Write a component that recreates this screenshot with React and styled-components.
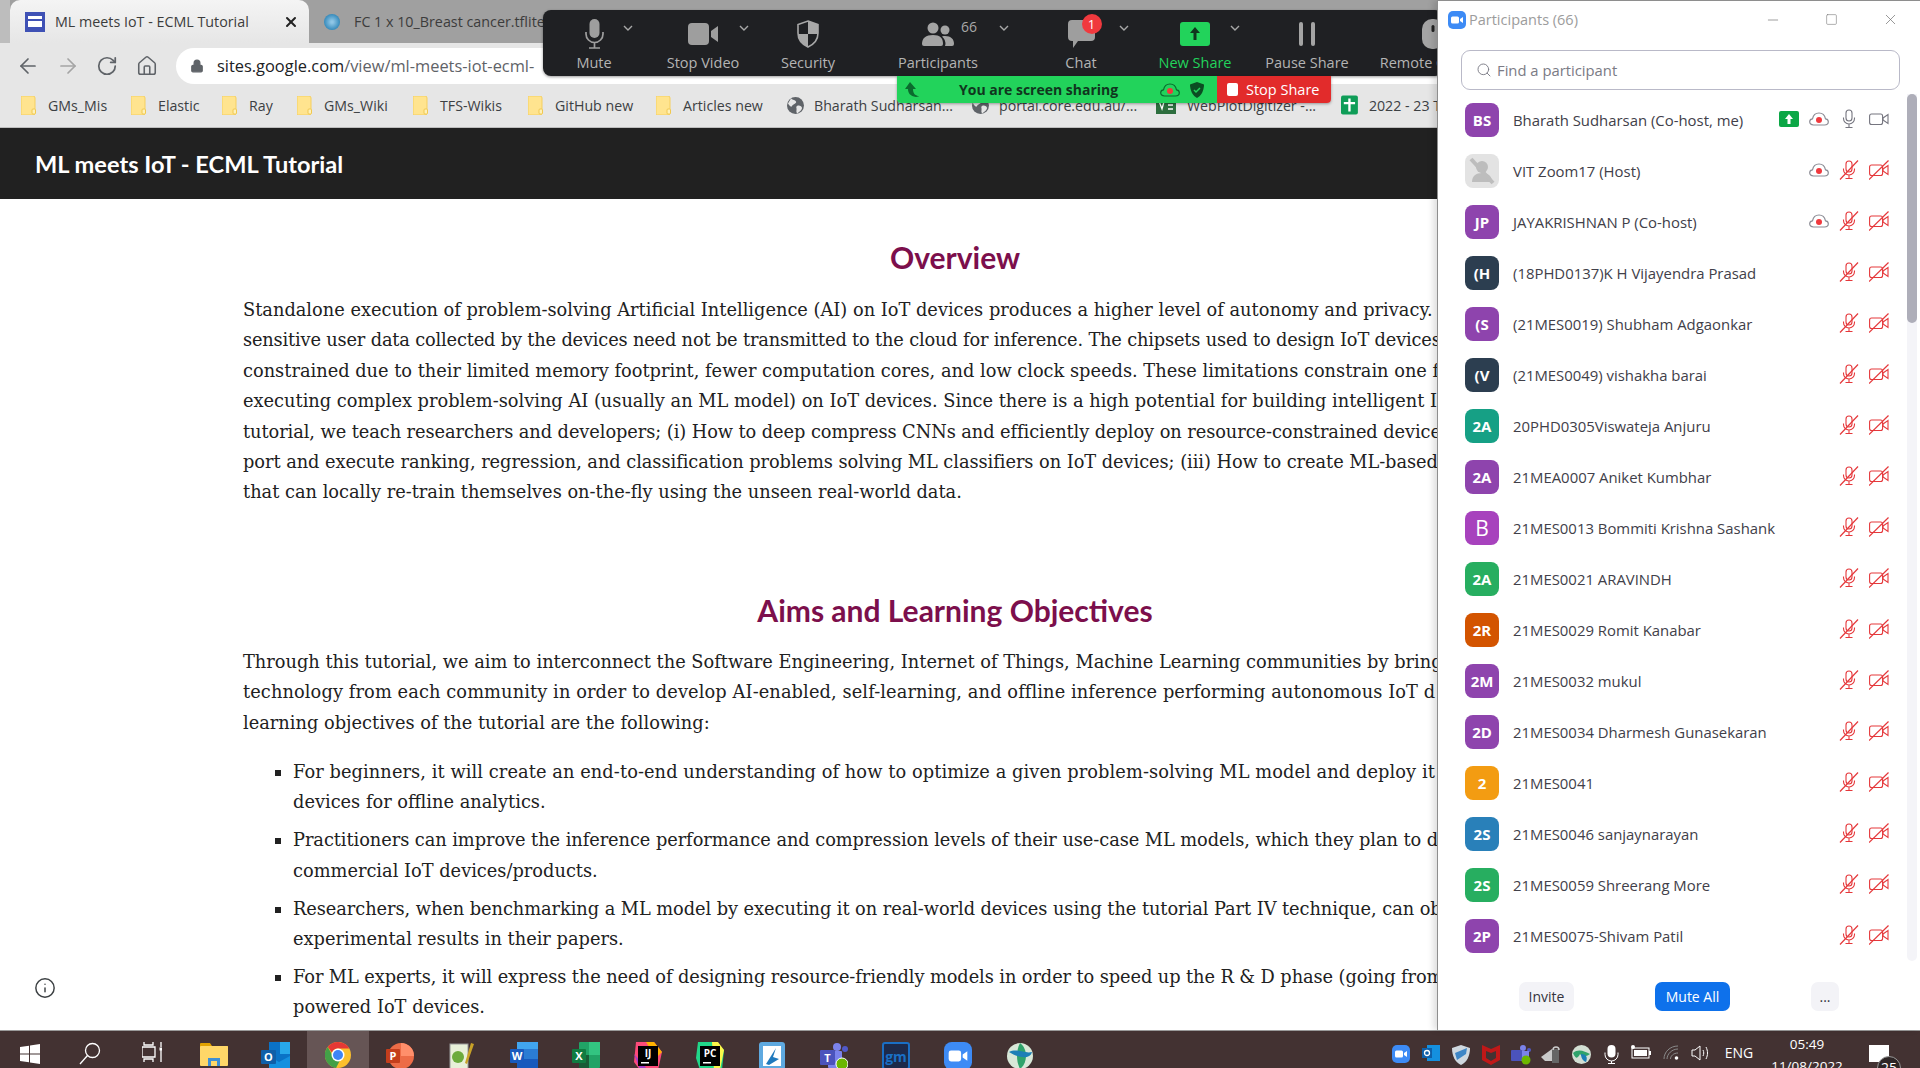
import React from 'react'
import styled, { createGlobalStyle } from 'styled-components'
import { ArrowLeft, ArrowRight, RotateCw, Home, Lock, Search, Info, X, Minus, Square } from 'lucide-react'

const UI_FONT = '"Open Sans", "Noto Sans", sans-serif'
const BODY_FONT = '"DejaVu Serif", serif'

const GlobalStyle = createGlobalStyle`
  html, body {
    margin: 0;
    width: 1920px;
    height: 1068px;
    overflow: hidden;
    background: #fff;
    font-family: ${UI_FONT};
  }
  * { box-sizing: border-box; }
`

const Screen = styled.div`
  width: 1920px;
  height: 1068px;
  display: flex;
  flex-direction: column;
  overflow: hidden;
`
const Desktop = styled.div`
  position: relative;
  height: 1030px;
  display: flex;
`

// browser
const Browser = styled.div`
  width: 1437px;
  display: flex;
  flex-direction: column;
  overflow: hidden;
`
const TabStrip = styled.div`
  height: 43px;
  flex: none;
  display: flex;
  padding-left: 10px;
  background: #a0a0a0;
  box-shadow: inset 10px 0 0 #bdbdbd;
`
const Tab = styled.div`
  width: ${p => p.$width}px;
  height: 43px;
  display: flex;
  align-items: center;
  padding-left: 15px;
  border-radius: 10px 10px 0 0;
  background: ${p => p.$active ? 'linear-gradient(#f4f4f4, #e6e6e6)' : 'transparent'};
  color: #3c3c3c;
  font-size: 14.3px;
  white-space: nowrap;
`
const SiteFavicon = styled.span`
  width: 20px;
  height: 20px;
  flex: none;
  margin-right: 10px;
  padding: 4px 3px;
  background: #3f51b5;
  display: grid;
  grid-template-columns: 8px 6px;
  grid-template-rows: 3px 6px;
  gap: 2px 0;
`
const FaviconBlock = styled.i`
  background: #fff;
  grid-column: ${p => p.$col};
`
const ModelFavicon = styled.span`
  width: 16px;
  height: 16px;
  flex: none;
  margin-right: 14px;
  border-radius: 50%;
  background: radial-gradient(circle, #8fc6e6 10%, #2f86b8 75%);
`
const TabClose = styled.span`
  margin-left: auto;
  margin-right: 10px;
  display: flex;
  color: #222;
`
const NavBar = styled.div`
  height: 45px;
  flex: none;
  display: flex;
  align-items: center;
  padding-left: 16px;
  background: #e6e6e6;
`
const NavButton = styled.span`
  width: 40px;
  display: flex;
  color: ${p => p.$muted ? '#a4a4a4' : '#5f6368'};
`
const AddressPill = styled.div`
  flex: 1;
  height: 36px;
  display: flex;
  align-items: center;
  gap: 13px;
  padding-left: 14px;
  background: #fff;
  border-radius: 18px 0 0 18px;
  color: #5f6368;
  font-size: 16.4px;
  white-space: nowrap;
  overflow: hidden;
`
const Domain = styled.span`
  color: #202124;
`
const BookmarkBar = styled.div`
  height: 40px;
  flex: none;
  display: flex;
  align-items: center;
  padding: 0 0 5px 21px;
  background: #e6e6e6;
  border-bottom: 1px solid #bdbdbd;
  white-space: nowrap;
`
const Bookmark = styled.div`
  width: ${p => p.$width}px;
  flex: none;
  display: flex;
  align-items: center;
  gap: ${p => p.$gap || 12}px;
  color: #3c4043;
  font-size: 14.2px;
`
const SiteHeader = styled.div`
  height: 71px;
  flex: none;
  display: flex;
  align-items: center;
  padding-left: 35px;
  background: #212121;
  color: #fff;
  font-family: Lato, sans-serif;
  font-weight: 700;
  font-size: 23.6px;
`
const Page = styled.div`
  position: relative;
  flex: 1;
  padding-top: 38px;
  background: #fff;
  overflow: hidden;
`
const Heading = styled.h2`
  width: 1910px;
  margin: 0 0 ${p => p.$after}px;
  color: #7c0f4c;
  font-family: Lato, sans-serif;
  font-weight: 700;
  font-size: 30px;
  line-height: 40px;
  text-align: center;
`
const Prose = styled.div`
  padding-left: 243px;
  margin-bottom: ${p => p.$after || 0}px;
  color: #212121;
  font-family: ${BODY_FONT};
  font-size: 17.8px;
  line-height: 30.4px;
`
const Line = styled.div`
  white-space: nowrap;
  letter-spacing: ${p => p.$track || 0}px;
`
const Bullets = styled.ul`
  margin: 0;
  padding: 0 0 0 293px;
  list-style: square;
  color: #212121;
  font-family: ${BODY_FONT};
  font-size: 17.8px;
  line-height: 30.4px;
`
const Bullet = styled.li`
  margin-bottom: 7.5px;
`
const InfoButton = styled.span`
  position: absolute;
  left: 34px;
  bottom: 31px;
  display: flex;
  color: #3c4043;
`

// zoom toolbar that floats over the browser
const ZoomBar = styled.div`
  position: absolute;
  left: 543px;
  top: 10px;
  width: 900px;
  height: 66px;
  display: flex;
  padding-top: 8px;
  background: #1f2023;
  border-radius: 8px;
  box-shadow: 0 1px 3px rgba(0, 0, 0, .4);
  z-index: 2;
`
const ToolItem = styled.div`
  width: ${p => p.$width}px;
  flex: none;
  display: flex;
  flex-direction: column;
  align-items: center;
`
const ToolIconRow = styled.div`
  width: 100%;
  height: 31px;
  display: grid;
  grid-template-columns: 1fr auto 1fr;
  align-items: center;
`
const ToolExtra = styled.div`
  display: flex;
  align-items: center;
  gap: ${p => p.$gap || 0}px;
  padding-left: ${p => p.$left || 0}px;
  margin-top: -10px;
  color: #a8a8a8;
  font-size: 14px;
`
const CountText = styled.span`
  margin-top: -4px;
`
const ToolIcon = styled.div`
  grid-column: 2;
  position: relative;
  display: flex;
`
const ToolLabel = styled.div`
  margin-top: 4px;
  color: ${p => p.$green ? '#22d35b' : '#b4b4b4'};
  font-size: 14.5px;
  line-height: 20px;
  white-space: nowrap;
`
const ChatBadge = styled.span`
  position: absolute;
  right: -7px;
  top: -5px;
  width: 20px;
  height: 20px;
  border-radius: 50%;
  background: #f0393e;
  color: #fff;
  font-size: 13px;
  line-height: 20px;
  text-align: center;
`
const ShareBanner = styled.div`
  position: absolute;
  left: 897px;
  top: 76px;
  width: 434px;
  height: 27px;
  display: flex;
  border-radius: 0 0 4px 4px;
  overflow: hidden;
  box-shadow: 0 1px 3px rgba(0, 0, 0, .35);
  z-index: 2;
`
const ShareStatus = styled.div`
  width: 320px;
  display: flex;
  align-items: center;
  gap: 10px;
  padding-left: 8px;
  background: #22d35b;
  color: #10361e;
  font-size: 14px;
  font-weight: 700;
`
const ShareText = styled.span`
  margin-left: 30px;
  margin-right: 32px;
  white-space: nowrap;
`
const StopShare = styled.div`
  flex: 1;
  display: flex;
  align-items: center;
  gap: 8px;
  padding-left: 10px;
  background: #e22b2b;
  color: #fff;
  font-size: 14.5px;
`
const StopSquare = styled.i`
  width: 11px;
  height: 13px;
  border-radius: 2px;
  background: #fff;
`

// participants window
const Panel = styled.aside`
  width: 483px;
  flex: none;
  display: flex;
  flex-direction: column;
  background: #fff;
  border-left: 1px solid #8e8e8e;
  border-top: 1px solid #8e8e8e;
  box-shadow: -4px 0 6px rgba(0, 0, 0, .12);
  z-index: 3;
`
const TitleBar = styled.div`
  height: 37px;
  flex: none;
  display: flex;
  align-items: center;
  padding-left: 10px;
  color: #9c9c9c;
  font-size: 14.5px;
`
const TitleText = styled.span`
  margin-left: 3px;
  margin-top: -1px;
  flex: 1;
`
const WindowButton = styled.span`
  width: 59px;
  display: flex;
  justify-content: center;
  color: #6e6e6e;
`
const SearchBox = styled.div`
  height: 40px;
  flex: none;
  margin: 12px 20px 0 23px;
  display: flex;
  align-items: center;
  gap: 5px;
  padding-left: 14px;
  border: 1px solid #b9b9c8;
  border-radius: 9px;
  color: #7b7b85;
  font-size: 14.8px;
`
const ListArea = styled.div`
  display: flex;
  margin-top: 4px;
  height: 867px;
  flex: none;
`
const Rows = styled.div`
  flex: 1;
`
const Row = styled.div`
  height: 51px;
  display: flex;
  align-items: center;
  padding: 0 18px 0 27px;
`
const Avatar = styled.div`
  width: 34px;
  height: 34px;
  flex: none;
  display: flex;
  align-items: center;
  justify-content: center;
  border-radius: 8px;
  background: ${p => p.$color};
  color: #fff;
  font-size: ${p => p.$big ? 21 : 15}px;
  font-weight: ${p => p.$big ? 400 : 700};
`
const Name = styled.div`
  margin-left: 14px;
  flex: 1;
  color: #414049;
  font-size: 14.9px;
  white-space: nowrap;
`
const StatusIcons = styled.div`
  display: flex;
  align-items: center;
  gap: 10px;
  margin-top: -2px;
`
const SharePill = styled.span`
  width: 20px;
  height: 16px;
  display: flex;
  align-items: center;
  justify-content: center;
  border-radius: 2px;
  background: #0ca746;
`
const ScrollTrack = styled.div`
  width: 10px;
  flex: none;
  margin-right: 3px;
  border-radius: 0 0 5px 5px;
  background: #f4f4f8;
`
const ScrollThumb = styled.div`
  height: 229px;
  border-radius: 5px;
  background: #aeaeb9;
`
const Footer = styled.div`
  flex: 1;
  display: flex;
  align-items: flex-start;
  padding-top: 21px;
`
const FooterButton = styled.div`
  width: ${p => p.$width}px;
  height: 29px;
  margin-left: ${p => p.$left}px;
  display: flex;
  align-items: center;
  justify-content: center;
  border-radius: 7px;
  background: ${p => p.$primary ? '#0e71eb' : '#f3f3f7'};
  color: ${p => p.$primary ? '#fff' : '#33333d'};
  font-size: 14px;
`

// windows taskbar
const Taskbar = styled.div`
  height: 38px;
  flex: none;
  display: flex;
  background: #433232;
  color: #fff;
  overflow: hidden;
  border-top: 1px solid #9a9a9a;
`
const TaskButton = styled.div`
  width: ${p => p.$width || 62}px;
  height: 38px;
  flex: none;
  display: flex;
  justify-content: center;
  padding-top: ${p => p.$top || 11}px;
  background: ${p => p.$active ? '#665555' : 'transparent'};
`
const TaskSpacer = styled.div`
  flex: 1;
`
const TrayIcon = styled.div`
  width: 30px;
  flex: none;
  display: flex;
  justify-content: center;
  padding-top: 14px;
`
const TrayText = styled.div`
  width: 46px;
  padding-top: 12px;
  color: #fff;
  font-size: 14px;
  line-height: 20px;
  text-align: center;
`
const Clock = styled.div`
  width: 90px;
  padding-top: 2px;
  text-align: center;
  font-size: 13.5px;
  line-height: 22px;
  white-space: nowrap;
`
const Notification = styled.div`
  position: relative;
  width: 68px;
  padding: 14px 0 0 17px;
`
const NotifyCard = styled.div`
  width: 20px;
  height: 17px;
  background: #fff;
`
const NotifyBadge = styled.div`
  position: absolute;
  left: 25px;
  top: 25px;
  width: 24px;
  height: 24px;
  border: 1px solid #999;
  border-radius: 50%;
  background: #2e2626;
  font-size: 14px;
  line-height: 22px;
  text-align: center;
`

// drawings
const FolderIcon = () => (
  <svg width="15" height="19" viewBox="0 0 15 19">
    <path d="M0 1.5A1.5 1.5 0 0 1 1.5 0H12a2 2 0 0 1 2 2v15a2 2 0 0 1-2 2H1.5A1.5 1.5 0 0 1 0 17.500z" fill="#ffe48f" stroke="#f5cf5f" />
    <rect x="11" y="13" width="3.500" height="5" rx="1" fill="#fff1b8" stroke="#f0c850" />
  </svg>
)

const GlobeFilled = () => (
  <svg width="17" height="17" viewBox="0 0 17 17">
    <circle cx="8.500" cy="8.500" r="8.500" fill="#5f6368" />
    <path d="M4 1.500c2 2 4 1 5 3S6 7 5 9 2 8 1 6.500zM10 9c2-1 5 0 5 2s-3 4-4 5-2-1-1.500-3S8.500 10 10 9z" fill="#e6e6e6" />
  </svg>
)

const MicIcon = ({ color = '#9e9e9e', size = 30 }) => (
  <svg width={size * .7} height={size} viewBox="0 0 21 30">
    <rect x="5.500" y="0" width="10" height="19" rx="5" fill={color} />
    <path d="M2 13v2a8.500 8.500 0 0 0 17 0v-2M10.500 23.500V29M5 29h11" fill="none" stroke={color} strokeWidth="1.700" />
  </svg>
)

const VideoIcon = () => (
  <svg width="31" height="22" viewBox="0 0 31 22">
    <rect width="21" height="22" rx="4" fill="#9e9e9e" />
    <path d="M23 8l7-5v16l-7-5z" fill="#9e9e9e" />
  </svg>
)

const ShieldIcon = () => (
  <svg width="24" height="28" viewBox="0 0 24 28">
    <path d="M12 1l10 3.500V13c0 7-4.500 11.500-10 14C6.500 24.500 2 20 2 13V4.500z" fill="none" stroke="#a8a8a8" strokeWidth="1.600" />
    <path d="M12 1l10 3.500V14H12zM12 14v13C6.500 24.500 2 20 2 14z" fill="#a8a8a8" />
  </svg>
)

const PeopleIcon = () => (
  <svg width="32" height="24" viewBox="0 0 32 24">
    <circle cx="11" cy="6" r="5.500" fill="#a4a4a4" />
    <circle cx="23" cy="8" r="4.500" fill="#a4a4a4" />
    <path d="M0 22c0-6 4-9 11-9s10 3 10 9a2 2 0 0 1-2 2H2a2 2 0 0 1-2-2z" fill="#a4a4a4" />
    <path d="M23 24h7a2 2 0 0 0 2-2c0-5-3-8-9-8-1 0-2 0-3 .5 2.500 2 3.500 5 3.500 7.500z" fill="#a4a4a4" />
  </svg>
)

const ChatIcon = () => (
  <svg width="27" height="29" viewBox="0 0 27 29">
    <path d="M4 1h19a4 4 0 0 1 4 4v13a4 4 0 0 1-4 4H10l-5 7v-7H4a4 4 0 0 1-4-4V5a4 4 0 0 1 4-4z" fill="#9e9e9e" />
  </svg>
)

const NewShareIcon = () => (
  <svg width="30" height="24" viewBox="0 0 30 24">
    <rect width="30" height="24" rx="3" fill="#22d35b" />
    <path d="M15 5l-5 6h3.500v7h3v-7H20z" fill="#10361e" />
  </svg>
)

const PauseIcon = () => (
  <svg width="18" height="24" viewBox="0 0 18 24">
    <rect x="1" y="0" width="4" height="24" rx="2" fill="#a4a4a4" />
    <rect x="13" y="0" width="4" height="24" rx="2" fill="#a4a4a4" />
  </svg>
)

const RemoteIcon = () => (
  <svg width="22" height="30" viewBox="0 0 22 30">
    <rect width="22" height="30" rx="10" fill="#a4a4a4" />
    <rect x="9.500" y="6" width="3" height="7" rx="1.500" fill="#222" />
  </svg>
)

const Chevron = () => (
  <svg width="10" height="7" viewBox="0 0 10 7">
    <path d="M1 1l4 4 4-4" fill="none" stroke="#a8a8a8" strokeWidth="1.400" />
  </svg>
)

const ZoomLogo = ({ size = 18 }) => (
  <svg width={size} height={size} viewBox="0 0 18 18">
    <rect width="18" height="18" rx="5" fill="#3d8bf5" />
    <rect x="3" y="5.500" width="8" height="7" rx="1.500" fill="#fff" />
    <path d="M12 8l3-2v6l-3-2z" fill="#fff" />
  </svg>
)

const CloudRec = ({ stroke = '#8c8c95' }) => (
  <svg width="20" height="14" viewBox="0 0 20 14">
    <path d="M4.500 13C2 13 .700 11.500.700 9.800c0-1.600 1-2.800 2.800-3C4.300 3 6.800 1 10 1s5.700 2 6.500 5.800c1.800.2 2.800 1.400 2.800 3 0 1.700-1.300 3.200-3.800 3.200z" fill="none" stroke={stroke} strokeWidth="1.200" />
    <circle cx="10" cy="8" r="3" fill="#f0393e" />
  </svg>
)

const RowMic = ({ muted }) => {
  const color = muted ? '#e5383b' : '#75757f'
  return (
    <svg width="20" height="20" viewBox="0 0 20 20">
      <rect x="7" y="1" width="6" height="11" rx="3" fill="none" stroke={color} strokeWidth="1.100" />
      <path d="M4.500 8.500v1a5.500 5.500 0 0 0 11 0v-1M10 15v3.500M6.500 18.500h7" fill="none" stroke={color} strokeWidth="1.100" />
      {muted && <path d="M1 19.500L19 .5" stroke={color} strokeWidth="1.200" />}
    </svg>
  )
}

const RowVideo = ({ muted }) => {
  const color = muted ? '#e5383b' : '#75757f'
  return (
    <svg width="20" height="20" viewBox="0 0 20 20">
      <rect x=".6" y="5" width="13" height="10.500" rx="2" fill="none" stroke={color} strokeWidth="1.100" />
      <path d="M14 9l5-3.500v9L14 11z" fill="none" stroke={color} strokeWidth="1.100" />
      {muted && <path d="M0 19.500L19.500 .5" stroke={color} strokeWidth="1.200" />}
    </svg>
  )
}

const TaskIcons = {
  windows: (
    <svg width="20" height="20" viewBox="0 0 20 20" fill="#fff">
      <path d="M0 3l9-1.300V9.500H0zM10 1.500L20 0v9.500H10zM0 10.500h9v7.800L0 17zM10 10.500h10V20l-10-1.500z" />
    </svg>
  ),
  search: (
    <svg width="22" height="24" viewBox="0 0 22 24" fill="none" stroke="#fff" strokeWidth="1.300">
      <circle cx="13.500" cy="8.500" r="7" />
      <path d="M8.500 13.500L1 22" />
    </svg>
  ),
  task: (
    <svg width="20" height="20" viewBox="0 0 20 20" fill="none" stroke="#fff" strokeWidth="1.300">
      <path d="M0 5h13v10H0zM2 0v3h9V0M2 20v-3h9v3M19 0v5M19 8v12" />
      <rect x="17.500" y="5.500" width="3" height="3" fill="#fff" stroke="none" />
    </svg>
  ),
  explorer: (
    <svg width="28" height="24" viewBox="0 0 28 24">
      <path d="M0 2a1 1 0 0 1 1-1h9l2 3h16v2H0z" fill="#e0a100" />
      <rect y="4" width="28" height="20" rx="1" fill="#ffd768" />
      <path d="M8 24v-8h12v8h-3v-5h-6v5z" fill="#3f8fd4" />
    </svg>
  ),
  outlook: (
    <svg width="30" height="26" viewBox="0 0 30 26">
      <rect x="8" y="0" width="21" height="26" fill="#0a72c6" />
      <rect x="19" y="0" width="10" height="12" fill="#28a8ea" />
      <path d="M8 14l10 6 11-6v12H8z" fill="#1490df" />
      <rect y="8" width="15" height="14" rx="1" fill="#0f5fa8" />
      <text x="7.500" y="19" textAnchor="middle" fontSize="11" fontWeight="700" fill="#fff" fontFamily="Open Sans, sans-serif">O</text>
    </svg>
  ),
  chrome: (
    <svg width="26" height="26" viewBox="0 0 26 26">
      <circle cx="13" cy="13" r="13" fill="#fbc02d" />
      <path d="M13 0a13 13 0 0 1 11.300 6.500H13A6.500 6.500 0 0 0 7 10.500L2.800 4.900A13 13 0 0 1 13 0z" fill="#e53935" />
      <path d="M2.800 4.900L7.800 14a6 6 0 0 0 6.800 5L11 26A13 13 0 0 1 2.800 4.900z" fill="#43a047" />
      <circle cx="13" cy="13" r="6.500" fill="#fff" />
      <circle cx="13" cy="13" r="5" fill="#3f85f4" />
    </svg>
  ),
  ppt: (
    <svg width="28" height="28" viewBox="0 0 28 28">
      <circle cx="15" cy="14" r="13" fill="#ed6c47" />
      <path d="M15 1a13 13 0 0 1 13 13H15z" fill="#ff8f6b" />
      <rect y="7" width="14" height="14" rx="1" fill="#c43e1c" />
      <text x="7" y="18" textAnchor="middle" fontSize="11" fontWeight="700" fill="#fff" fontFamily="Open Sans, sans-serif">P</text>
    </svg>
  ),
  notepad: (
    <svg width="26" height="28" viewBox="0 0 26 28">
      <rect x="1" y="2" width="18" height="25" fill="#e8f0d8" stroke="#9a9a9a" />
      <circle cx="9" cy="15" r="6" fill="#6cab3c" />
      <path d="M22 1l3 1-7 20-2-1z" fill="#c9a227" />
    </svg>
  ),
  word: (
    <svg width="28" height="26" viewBox="0 0 28 26">
      <rect x="7" y="0" width="21" height="26" rx="1" fill="#2b7cd3" />
      <rect x="7" y="0" width="21" height="7" fill="#41a5ee" />
      <rect x="7" y="17" width="21" height="9" fill="#185abd" />
      <rect y="7" width="14" height="14" rx="1" fill="#185abd" />
      <text x="7" y="18" textAnchor="middle" fontSize="11" fontWeight="700" fill="#fff" fontFamily="Open Sans, sans-serif">W</text>
    </svg>
  ),
  excel: (
    <svg width="28" height="26" viewBox="0 0 28 26">
      <rect x="7" y="0" width="21" height="26" rx="1" fill="#21a366" />
      <rect x="17" y="0" width="11" height="13" fill="#33c481" />
      <rect x="7" y="13" width="10" height="13" fill="#185c37" />
      <rect y="7" width="14" height="14" rx="1" fill="#107c41" />
      <text x="7" y="18" textAnchor="middle" fontSize="11" fontWeight="700" fill="#fff" fontFamily="Open Sans, sans-serif">X</text>
    </svg>
  ),
  idea: (
    <svg width="28" height="28" viewBox="0 0 28 28">
      <path d="M2 0h18l8 10-4 18H6L0 20z" fill="#fc4a79" />
      <path d="M12 0h8l8 10-6 6z" fill="#ffb300" />
      <path d="M0 12l6 16h8z" fill="#a63ec9" />
      <rect x="4" y="4" width="20" height="20" fill="#000" />
      <text x="14" y="15" textAnchor="middle" fontSize="10" fontWeight="700" fill="#fff" fontFamily="Open Sans, sans-serif">IJ</text>
      <rect x="7" y="20" width="8" height="1.500" fill="#fff" />
    </svg>
  ),
  pycharm: (
    <svg width="28" height="28" viewBox="0 0 28 28">
      <path d="M2 0h18l8 8-2 20H4L0 16z" fill="#21d789" />
      <path d="M16 0h6l6 8-4 20h-6z" fill="#fcf84a" />
      <rect x="4" y="4" width="20" height="20" fill="#000" />
      <text x="14" y="15" textAnchor="middle" fontSize="10" fontWeight="700" fill="#fff" fontFamily="Open Sans, sans-serif">PC</text>
      <rect x="7" y="20" width="8" height="1.500" fill="#fff" />
    </svg>
  ),
  snip: (
    <svg width="26" height="28" viewBox="0 0 26 28">
      <rect width="26" height="28" rx="3" fill="#5ea9e0" />
      <rect x="4" y="4" width="18" height="20" fill="#fff" />
      <path d="M7 22L17 6l-3 9 6 2-10 6z" fill="#1f79bd" />
    </svg>
  ),
  teams: (
    <svg width="28" height="28" viewBox="0 0 28 28">
      <circle cx="17" cy="5" r="4" fill="#7b83eb" />
      <circle cx="25" cy="7" r="3" fill="#5059c9" />
      <rect x="8" y="9" width="14" height="17" rx="1" fill="#7b83eb" />
      <rect y="8" width="15" height="15" rx="1" fill="#4b53bc" />
      <text x="7.500" y="19.500" textAnchor="middle" fontSize="11" fontWeight="700" fill="#fff" fontFamily="Open Sans, sans-serif">T</text>
      <circle cx="22" cy="22" r="6" fill="#6bb700" stroke="#fff" />
    </svg>
  ),
  gm: (
    <svg width="28" height="28" viewBox="0 0 28 28">
      <rect x="1" y="1" width="26" height="26" rx="2" fill="#1d2a4a" stroke="#1a6fc4" strokeWidth="2" />
      <text x="14" y="20" textAnchor="middle" fontSize="14" fontWeight="700" fill="#1a6fc4" fontFamily="Open Sans, sans-serif">gm</text>
    </svg>
  ),
  zoom: <ZoomLogo size={28} />,
  vpn: (
    <svg width="26" height="28" viewBox="0 0 26 28">
      <circle cx="13" cy="14" r="13" fill="#d8e8d8" />
      <path d="M13 1c8 6 8 20 0 26-4-8-4-18 0-26z" fill="#2fa36b" />
      <path d="M2 10c8-4 16 2 23 0-2 8-14 6-23 0z" fill="#1c7fb6" />
    </svg>
  )
}

const TrayDrawings = {
  zoom: <ZoomLogo size={18} />,
  outlook: (
    <svg width="18" height="16" viewBox="0 0 18 16">
      <rect x="5" width="13" height="16" fill="#1490df" />
      <rect y="3" width="10" height="10" fill="#0f5fa8" />
      <circle cx="5" cy="8" r="2.500" fill="none" stroke="#fff" strokeWidth="1.300" />
    </svg>
  ),
  shield: (
    <svg width="18" height="20" viewBox="0 0 18 20">
      <path d="M9 0l9 3c0 8-3 14-9 17C3 17 0 11 0 3z" fill="#cfd8df" />
      <path d="M3 8l12-5-1 6-9 6z" fill="#3e86c6" />
    </svg>
  ),
  mcafee: (
    <svg width="18" height="20" viewBox="0 0 18 20">
      <path d="M0 0l9 4 9-4v15l-9 5-9-5z" fill="#c01818" />
      <path d="M4 6l5 2 5-2v7l-5 3-5-3z" fill="#433232" />
    </svg>
  ),
  teams: (
    <svg width="20" height="20" viewBox="0 0 20 20">
      <circle cx="12" cy="3" r="3" fill="#7b83eb" />
      <circle cx="18" cy="5" r="2" fill="#5059c9" />
      <rect x="5" y="6" width="13" height="10" fill="#7b83eb" />
      <rect y="5" width="11" height="11" rx="1" fill="#4b53bc" />
      <circle cx="15" cy="15" r="4.500" fill="#6bb700" />
    </svg>
  ),
  lock: (
    <svg width="20" height="18" viewBox="0 0 20 18">
      <path d="M0 12l11-8 2 12H4z" fill="#c9c9c9" />
      <path d="M11 4h7v14h-7z" fill="#666" />
      <path d="M12 5a3 3 0 0 1 6 0" fill="none" stroke="#ccc" strokeWidth="1.500" />
    </svg>
  ),
  globe: (
    <svg width="19" height="19" viewBox="0 0 19 19">
      <circle cx="9.500" cy="9.500" r="9.500" fill="#d3dfd3" />
      <path d="M1 8c6-5 12-1 17 1-4 3-8 3-10 0-2 4-4 6-7-1z" fill="#2fa36b" />
      <path d="M9 9c5 0 7 3 5 8-3-1-5-4-5-8z" fill="#1c7fb6" />
    </svg>
  ),
  mic: (
    <svg width="15" height="19" viewBox="0 0 15 19" fill="none" stroke="#fff">
      <rect x="3.500" width="8" height="12.500" rx="4" fill="#fff" stroke="none" />
      <path d="M1 7.500v2a6.500 6.500 0 0 0 13 0v-2M7.500 16v3M4 18.500h7" />
    </svg>
  ),
  battery: (
    <svg width="20" height="14" viewBox="0 0 20 14">
      <rect x="1" y="3" width="17" height="10" fill="none" stroke="#fff" />
      <rect x="3" y="5" width="13" height="6" fill="#fff" />
      <rect x="18" y="6" width="2" height="4" fill="#fff" />
      <circle cx="2" cy="2" r="2" fill="#fff" />
    </svg>
  ),
  wifi: (
    <svg width="16" height="15" viewBox="0 0 16 15" fill="none" stroke="#8a8a8a">
      <path d="M1 14C1 7 7 1 15 1M4 14c0-5 5-10 11-10M7.500 14c0-3 3-6 7.500-6" />
      <circle cx="13.500" cy="13" r="1.800" fill="#fff" stroke="none" />
    </svg>
  ),
  volume: (
    <svg width="20" height="16" viewBox="0 0 20 16" fill="none" stroke="#fff">
      <path d="M1 5h3l5-4v14l-5-4H1zM12 5c1 2 1 4 0 6M15 2c2 4 2 8 0 12" />
    </svg>
  )
}

const bookmarks = [
  { label: 'GMs_Mis', width: 110 },
  { label: 'Elastic', width: 91 },
  { label: 'Ray', width: 75 },
  { label: 'GMs_Wiki', width: 116 },
  { label: 'TFS-Wikis', width: 115 },
  { label: 'GitHub new', width: 128 },
  { label: 'Articles new', width: 131 }
]

const participants = [
  { initials: 'BS', color: '#8e44ad', name: 'Bharath Sudharsan (Co-host, me)', share: true, cloud: true, live: true },
  { initials: '', color: '#e3e3e3', name: 'VIT Zoom17 (Host)', cloud: true, blank: true },
  { initials: 'JP', color: '#8e44ad', name: 'JAYAKRISHNAN P (Co-host)', cloud: true },
  { initials: '(H', color: '#2c3e50', name: '(18PHD0137)K H Vijayendra Prasad' },
  { initials: '(S', color: '#8e44ad', name: '(21MES0019) Shubham Adgaonkar' },
  { initials: '(V', color: '#2c3e50', name: '(21MES0049) vishakha barai' },
  { initials: '2A', color: '#16a085', name: '20PHD0305Viswateja Anjuru' },
  { initials: '2A', color: '#8e44ad', name: '21MEA0007 Aniket Kumbhar' },
  { initials: 'B', color: '#a742bd', name: '21MES0013 Bommiti Krishna Sashank', big: true },
  { initials: '2A', color: '#27ae60', name: '21MES0021 ARAVINDH' },
  { initials: '2R', color: '#d35400', name: '21MES0029 Romit Kanabar' },
  { initials: '2M', color: '#8e44ad', name: '21MES0032 mukul' },
  { initials: '2D', color: '#8e44ad', name: '21MES0034 Dharmesh Gunasekaran' },
  { initials: '2', color: '#f39c12', name: '21MES0041' },
  { initials: '2S', color: '#2980b9', name: '21MES0046 sanjaynarayan' },
  { initials: '2S', color: '#27ae60', name: '21MES0059 Shreerang More' },
  { initials: '2P', color: '#8e44ad', name: '21MES0075-Shivam Patil' }
]

// track: small letter-spacing so each line reaches the window edge where the original does
const overview = [
  { text: 'Standalone execution of problem-solving Artificial Intelligence (AI) on IoT devices produces a higher level of autonomy and privacy.' },
  { text: 'sensitive user data collected by the devices need not be transmitted to the cloud for inference. The chipsets used to design IoT devices', track: -0.17 },
  { text: 'constrained due to their limited memory footprint, fewer computation cores, and low clock speeds. These limitations constrain one f' },
  { text: 'executing complex problem-solving AI (usually an ML model) on IoT devices. Since there is a high potential for building intelligent I' },
  { text: 'tutorial, we teach researchers and developers; (i) How to deep compress CNNs and efficiently deploy on resource-constrained device', track: -0.07 },
  { text: 'port and execute ranking, regression, and classification problems solving ML classifiers on IoT devices; (iii) How to create ML-based', track: -0.05 },
  { text: 'that can locally re-train themselves on-the-fly using the unseen real-world data.' }
]

const aims = [
  { text: 'Through this tutorial, we aim to interconnect the Software Engineering, Internet of Things, Machine Learning communities by bring' },
  { text: 'technology from each community in order to develop AI-enabled, self-learning, and offline inference performing autonomous IoT d', track: 0.1 },
  { text: 'learning objectives of the tutorial are the following:' }
]

const objectives = [
  [{ text: 'For beginners, it will create an end-to-end understanding of how to optimize a given problem-solving ML model and deploy it', track: 0.08 }, { text: 'devices for offline analytics.' }],
  [{ text: 'Practitioners can improve the inference performance and compression levels of their use-case ML models, which they plan to d', track: -0.06 }, { text: 'commercial IoT devices/products.' }],
  [{ text: 'Researchers, when benchmarking a ML model by executing it on real-world devices using the tutorial Part IV technique, can ob', track: -0.06 }, { text: 'experimental results in their papers.' }],
  [{ text: 'For ML experts, it will express the need of designing resource-friendly models in order to speed up the R & D phase (going from', track: -0.09 }, { text: 'powered IoT devices.' }]
]

const BlankUser = () => (
  <svg width="34" height="34" viewBox="0 0 34 34">
    <circle cx="17" cy="13" r="6" fill="#bdbdbd" />
    <path d="M7 28c0-6 4-9 10-9s10 3 10 9z" fill="#bdbdbd" />
    <path d="M6 5l22 24" stroke="#bdbdbd" strokeWidth="4" />
  </svg>
)

const Tool = ({ width, label, green, icon, extra }) => (
  <ToolItem $width={width}>
    <ToolIconRow>
      <ToolIcon>{icon}</ToolIcon>
      {extra}
    </ToolIconRow>
    <ToolLabel $green={green}>{label}</ToolLabel>
  </ToolItem>
)

const taskOrder = ['search', 'task', 'explorer', 'outlook', 'chrome', 'ppt', 'notepad', 'word', 'excel', 'idea', 'pycharm', 'snip', 'teams', 'gm', 'zoom', 'vpn']
const trayOrder = ['zoom', 'outlook', 'shield', 'mcafee', 'teams', 'lock', 'globe', 'mic', 'battery', 'wifi', 'volume']

export default function App() {
  return (
    <Screen>
      <GlobalStyle />
      <Desktop>
        <Browser>
          <TabStrip>
            <Tab $active $width={299}>
              <SiteFavicon>
                <FaviconBlock $col="1 / 3" />
                <FaviconBlock $col="1" />
                <FaviconBlock $col="2" />
              </SiteFavicon>
              ML meets IoT - ECML Tutorial
              <TabClose><X size={16} strokeWidth={3} /></TabClose>
            </Tab>
            <Tab $width={250}>
              <ModelFavicon />
              FC 1 x 10_Breast cancer.tflite
            </Tab>
          </TabStrip>
          <NavBar>
            <NavButton><ArrowLeft size={24} strokeWidth={1.7} /></NavButton>
            <NavButton $muted><ArrowRight size={24} strokeWidth={1.7} /></NavButton>
            <NavButton><RotateCw size={22} strokeWidth={1.9} /></NavButton>
            <NavButton><Home size={22} strokeWidth={1.7} /></NavButton>
            <AddressPill>
              <Lock size={14} fill="#5f6368" strokeWidth={2} />
              <span><Domain>sites.google.com</Domain>/view/ml-meets-iot-ecml-</span>
            </AddressPill>
          </NavBar>
          <BookmarkBar>
            {bookmarks.map(b => (
              <Bookmark key={b.label} $width={b.width}><FolderIcon />{b.label}</Bookmark>
            ))}
            <Bookmark $width={185} $gap={10}><GlobeFilled />Bharath Sudharsan...</Bookmark>
            <Bookmark $width={184} $gap={10}><GlobeFilled />portal.core.edu.au/...</Bookmark>
            <Bookmark $width={185} $gap={11}>
              <svg width="20" height="18" viewBox="0 0 20 18">
                <rect width="20" height="18" fill="#2d6e3e" />
                <path d="M3 5l3 8 3-11M12 9h5M12 13h5" fill="none" stroke="#fff" strokeWidth="1.300" />
              </svg>
              WebPlotDigitizer -...
            </Bookmark>
            <Bookmark $width={100} $gap={11}>
              <svg width="18" height="20" viewBox="0 0 18 20">
                <rect width="18" height="20" rx="2" fill="#0f9d58" />
                <path d="M9 3v14M3 8h12" stroke="#fff" strokeWidth="2.500" />
              </svg>
              2022 - 23 T
            </Bookmark>
          </BookmarkBar>
          <SiteHeader>ML meets IoT - ECML Tutorial</SiteHeader>
          <Page>
            <Heading $after={18}>Overview</Heading>
            <Prose $after={82}>
              {overview.map(l => <Line key={l.text} $track={l.track}>{l.text}</Line>)}
            </Prose>
            <Heading $after={17}>Aims and Learning Objectives</Heading>
            <Prose $after={19}>
              {aims.map(l => <Line key={l.text} $track={l.track}>{l.text}</Line>)}
            </Prose>
            <Bullets>
              {objectives.map(item => (
                <Bullet key={item[0].text}>
                  {item.map(l => <Line key={l.text} $track={l.track}>{l.text}</Line>)}
                </Bullet>
              ))}
            </Bullets>
            <InfoButton><Info size={22} strokeWidth={1.6} /></InfoButton>
          </Page>
        </Browser>

        <ZoomBar>
          <Tool width={102} label="Mute" icon={<MicIcon />} extra={<ToolExtra $left={18}><Chevron /></ToolExtra>} />
          <Tool width={116} label="Stop Video" icon={<VideoIcon />} extra={<ToolExtra $left={20}><Chevron /></ToolExtra>} />
          <Tool width={94} label="Security" icon={<ShieldIcon />} />
          <Tool width={166} label="Participants" icon={<PeopleIcon />} extra={<ToolExtra $left={7} $gap={22}><CountText>66</CountText><Chevron /></ToolExtra>} />
          <Tool width={120} label="Chat" icon={<><ChatIcon /><ChatBadge>1</ChatBadge></>} extra={<ToolExtra $left={24}><Chevron /></ToolExtra>} />
          <Tool width={108} label="New Share" green icon={<NewShareIcon />} extra={<ToolExtra $left={20}><Chevron /></ToolExtra>} />
          <Tool width={116} label="Pause Share" icon={<PauseIcon />} />
          <Tool width={136} label="Remote Control" icon={<RemoteIcon />} />
        </ZoomBar>

        <ShareBanner>
          <ShareStatus>
            <svg width="14" height="16" viewBox="0 0 14 16">
              <path d="M5 0L0 7h3c0 4 2 7 8 8 2 0 3-1 3-1-3 0-6-2-6-7h3z" fill="#0b6b2e" />
            </svg>
            <ShareText>You are screen sharing</ShareText>
            <CloudRec stroke="#0b6b2e" />
            <svg width="14" height="16" viewBox="0 0 14 16">
              <path d="M7 0l7 2.500C14 9 11 14 7 16 3 14 0 9 0 2.500z" fill="#0b4d22" />
              <path d="M4 8l2 2 4-4" fill="none" stroke="#22d35b" strokeWidth="1.500" />
            </svg>
          </ShareStatus>
          <StopShare><StopSquare />Stop Share</StopShare>
        </ShareBanner>

        <Panel>
          <TitleBar>
            <ZoomLogo />
            <TitleText>Participants (66)</TitleText>
            <WindowButton><Minus size={16} strokeWidth={1} /></WindowButton>
            <WindowButton><Square size={13} strokeWidth={1} /></WindowButton>
            <WindowButton><X size={17} strokeWidth={1} /></WindowButton>
          </TitleBar>
          <SearchBox>
            <Search size={16} strokeWidth={1.4} />
            Find a participant
          </SearchBox>
          <ListArea>
            <Rows>
              {participants.map(p => (
                <Row key={p.name}>
                  <Avatar $color={p.color} $big={p.big}>{p.blank ? <BlankUser /> : p.initials}</Avatar>
                  <Name>{p.name}</Name>
                  <StatusIcons>
                    {p.share && (
                      <SharePill>
                        <svg width="8" height="10" viewBox="0 0 8 10"><path d="M4 0L0 5h2.500v5h3V5H8z" fill="#fff" /></svg>
                      </SharePill>
                    )}
                    {p.cloud && <CloudRec />}
                    <RowMic muted={!p.live} />
                    <RowVideo muted={!p.live} />
                  </StatusIcons>
                </Row>
              ))}
            </Rows>
            <ScrollTrack><ScrollThumb /></ScrollTrack>
          </ListArea>
          <Footer>
            <FooterButton $width={55} $left={81}>Invite</FooterButton>
            <FooterButton $width={75} $left={81} $primary>Mute All</FooterButton>
            <FooterButton $width={28} $left={81}>...</FooterButton>
          </Footer>
        </Panel>
      </Desktop>

      <Taskbar>
        <TaskButton $width={59} $top={13}>{TaskIcons.windows}</TaskButton>
        {taskOrder.map(name => (
          <TaskButton key={name} $active={name === 'chrome'}>{TaskIcons[name]}</TaskButton>
        ))}
        <TaskSpacer />
        {trayOrder.map((name, i) => (
          <TrayIcon key={name + i}>{TrayDrawings[name]}</TrayIcon>
        ))}
        <TrayText>ENG</TrayText>
        <Clock>05:49<br />11/08/2022</Clock>
        <Notification>
          <NotifyCard />
          <NotifyBadge>25</NotifyBadge>
        </Notification>
      </Taskbar>
    </Screen>
  )
}
